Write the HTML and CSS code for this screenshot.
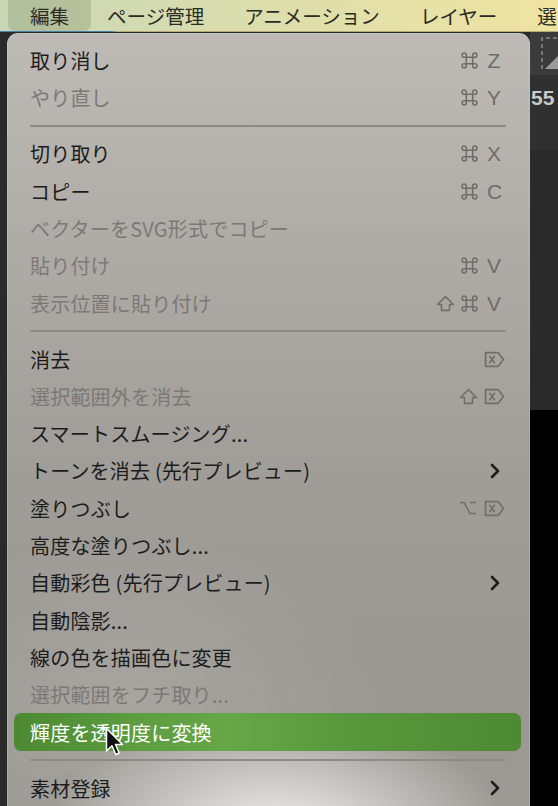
FILE: index.html
```html
<!DOCTYPE html>
<html>
	<head>
		<meta charset="UTF-8">
		<title>編集メニュー</title>
		<link rel="stylesheet" href="styles.css">
	</head>
	<body>
		<svg width="0" height="0" class="defs">
			<defs>
				<path id="cmd" d="M6 4V14A2 2 0 1 1 4 12H14A2 2 0 1 1 12 14V4A2 2 0 1 1 14 6H4A2 2 0 1 1 6 4Z"/>
				<path id="shift" d="M9 1.5L16.5 9H12.8V14.5H5.2V9H1.5Z"/>
				<g id="del"><path d="M1.5 1.5H13.5L18.5 8L13.5 14.5H1.5Z" stroke-linejoin="round"/><path d="M5.5 5L10 11M10 5L5.5 11" stroke-linecap="round"/></g>
			</defs>
		</svg>

		<header class="menubar">
			<span class="bar-item open">編集</span>
			<span class="bar-item">ページ管理</span>
			<span class="bar-item">アニメーション</span>
			<span class="bar-item">レイヤー</span>
			<span class="bar-item">選</span>
		</header>
		<div class="bar-line"></div>

		<section class="workspace">
			<div class="side-left"></div>

			<div class="menu">
				<div class="row"><span>取り消し</span><span class="keys"><svg class="ic" viewBox="1 1 16 16"><use href="#cmd"/></svg><b>Z</b></span></div>
				<div class="row off"><span>やり直し</span><span class="keys"><svg class="ic" viewBox="1 1 16 16"><use href="#cmd"/></svg><b>Y</b></span></div>
				<div class="sep"></div>
				<div class="row"><span>切り取り</span><span class="keys"><svg class="ic" viewBox="1 1 16 16"><use href="#cmd"/></svg><b>X</b></span></div>
				<div class="row"><span>コピー</span><span class="keys"><svg class="ic" viewBox="1 1 16 16"><use href="#cmd"/></svg><b>C</b></span></div>
				<div class="row off"><span>ベクターをSVG形式でコピー</span></div>
				<div class="row off"><span>貼り付け</span><span class="keys"><svg class="ic" viewBox="1 1 16 16"><use href="#cmd"/></svg><b>V</b></span></div>
				<div class="row off"><span>表示位置に貼り付け</span><span class="keys"><svg class="ic shift" viewBox="0 0 18 16"><use href="#shift"/></svg><svg class="ic" viewBox="1 1 16 16"><use href="#cmd"/></svg><b>V</b></span></div>
				<div class="sep"></div>
				<div class="row"><span>消去</span>
					<span class="keys"><svg class="del" viewBox="0 0 20 16"><use href="#del"/></svg></span>
				</div>
				<div class="row off"><span>選択範囲外を消去</span>
					<span class="keys"><svg class="ic shift" viewBox="0 0 18 16"><use href="#shift"/></svg><svg class="del" viewBox="0 0 20 16"><use href="#del"/></svg></span>
				</div>
				<div class="row"><span>スマートスムージング...</span></div>
				<div class="row"><span>トーンを消去 (先行プレビュー)</span>
					<svg class="chev" width="10" height="16" viewBox="0 0 10 16"><path d="M2 2L8 8L2 14"/></svg>
				</div>
				<div class="row"><span>塗りつぶし</span>
					<span class="keys">
						<svg class="opt" width="18" height="14" viewBox="0 0 18 14"><path d="M1 1.5H5L11 12.5H17M11 1.5H17"/></svg>
						<svg class="del" viewBox="0 0 20 16"><use href="#del"/></svg>
					</span>
				</div>
				<div class="row"><span>高度な塗りつぶし...</span></div>
				<div class="row"><span>自動彩色 (先行プレビュー)</span>
					<svg class="chev" width="10" height="16" viewBox="0 0 10 16"><path d="M2 2L8 8L2 14"/></svg>
				</div>
				<div class="row"><span>自動陰影...</span></div>
				<div class="row"><span>線の色を描画色に変更</span></div>
				<div class="row off"><span>選択範囲をフチ取り...</span></div>
				<div class="row active"><span>輝度を透明度に変換</span></div>
				<div class="sep"></div>
				<div class="row"><span>素材登録</span>
					<svg class="chev" width="10" height="16" viewBox="0 0 10 16"><path d="M2 2L8 8L2 14"/></svg>
				</div>
			</div>

			<div class="side-right">
				<div class="tool-cell">
					<svg width="30" height="36" viewBox="0 0 30 36"><path d="M3 34V3H28" fill="none" stroke="#8a8a8a" stroke-width="1.5" stroke-dasharray="4 3"/><path d="M6 34L30 10V34Z" fill="#9a9a9a"/></svg>
				</div>
				<div class="num-cell">55</div>
				<div class="dark-cell"></div>
				<div class="black-cell"></div>
			</div>
		</section>

		<svg class="cursor" width="20" height="30" viewBox="0 0 20 30"><path d="M1.5 1.5V24L7 18.8L10.8 27.5L14.2 26L10.5 17.5H17.5Z" fill="#111" stroke="#fff" stroke-width="1.5" stroke-linejoin="round"/></svg>
	</body>
</html>
```

FILE: styles.css
```css
html, body {
	margin: 0;
	padding: 0;
}
body {
	width: 558px;
	height: 806px;
	overflow: hidden;
	background: #2a2a2a;
	font-family: "Noto Sans CJK JP", "Noto Sans", sans-serif;
	position: relative;
}
.defs {
	position: absolute;
}

/* top menu bar */
.menubar {
	height: 31px;
	display: flex;
	align-items: stretch;
	padding-left: 8px;
	background: linear-gradient(90deg, #c8d6b5 0%, #d9ddae 40%, #e7e1a6 75%, #eee3a0 100%);
	white-space: nowrap;
	overflow: hidden;
}
.bar-item {
	display: flex;
	align-items: center;
	padding: 0 20px;
	font-size: 19.5px;
	color: #2b2b26;
	line-height: 1;
}
.bar-item.open {
	background: rgba(90, 100, 60, 0.2);
	border-radius: 0 0 7px 7px;
	padding: 0 22px 0 22px;
	margin-right: -4px;
}
.bar-line {
	height: 1px;
	background: linear-gradient(90deg, #4a7fa8 0%, #4a7fa8 20%, #b7a977 21%, #b7a977 100%);
}

.workspace {
	display: flex;
	height: 774px;
	padding-top: 1px;
}
.side-left {
	width: 7px;
	background: #2a2a2a;
}

/* the drop-down menu */
.menu {
	width: 507px;
	padding: 9px 9px 0 7px;
	border-radius: 11px 11px 0 0;
	background:
		radial-gradient(ellipse 230px 120px at 270px 800px, rgba(255, 255, 255, 0.85), rgba(255, 255, 255, 0) 100%),
		radial-gradient(ellipse 260px 160px at 120px 660px, rgba(255, 255, 255, 0.12), rgba(255, 255, 255, 0) 100%),
		linear-gradient(180deg, #bebbb7 0%, #b0ada9 25%, #a19e99 55%, #9b9893 80%, #9d9a95 100%);
	box-shadow: inset 0 0 0 1px rgba(255, 255, 255, 0.15);
}
.row {
	height: 37.3px;
	display: flex;
	align-items: center;
	justify-content: space-between;
	padding: 0 20px 0 16px;
	font-size: 20px;
	color: #1c1c1c;
	white-space: nowrap;
}
.row span:first-child {
	line-height: 1;
	padding-top: 1px;
	letter-spacing: 0.2px;
}
.row.off {
	color: #7c7975;
}
.row.active {
	color: #fff;
	border-radius: 7px;
	background: linear-gradient(90deg, #4c8931 0%, #5e9d40 25%, #67a748 42%, #5a983d 65%, #4d8a32 100%);
}
.sep {
	height: 18.7px;
	display: flex;
	align-items: center;
	padding: 0 15px 0 16px;
}
.sep::before {
	content: "";
	flex: 1;
	height: 1.5px;
	background: #8e8a85;
}

/* shortcut glyphs */
.keys {
	display: flex;
	align-items: center;
	color: #6f6c68;
}
.keys svg {
	fill: none;
	stroke: #716e6a;
	stroke-width: 1.5;
}
.keys .ic {
	width: 17px;
	height: 17px;
	margin-right: 9px;
}
.keys .ic.shift {
	width: 19px;
	height: 17px;
	margin-right: 6px;
	stroke-linejoin: round;
}
.keys b {
	font-weight: normal;
	font-family: "Liberation Sans", sans-serif;
	font-size: 21px;
	line-height: 1;
	width: 14px;
	text-align: center;
}
.keys .del {
	width: 21px;
	height: 17px;
	margin-right: -4px;
	stroke-width: 1.6;
}
.keys .opt {
	margin-right: 7px;
}
.chev {
	margin-right: 1px;
}
.chev path {
	fill: none;
	stroke: #1e1e1e;
	stroke-width: 2.6;
	stroke-linecap: round;
	stroke-linejoin: round;
}

/* strip of the app behind the menu */
.side-right {
	flex: 1;
	display: flex;
	flex-direction: column;
	overflow: hidden;
	margin-top: -1px;
}
.tool-cell {
	height: 43px;
	background: #3b3b3b;
	padding: 3px 0 0 9px;
	box-sizing: border-box;
}
.num-cell {
	height: 75px;
	background: #303030;
	color: #c9c9c9;
	font-family: "Liberation Sans", sans-serif;
	font-weight: bold;
	font-size: 21px;
	padding: 11px 0 0 1px;
	box-sizing: border-box;
	white-space: nowrap;
}
.dark-cell {
	height: 260px;
	background: #2a2a2a;
}
.black-cell {
	flex: 1;
	background: #000;
}

.cursor {
	position: absolute;
	left: 105px;
	top: 727px;
}
```
